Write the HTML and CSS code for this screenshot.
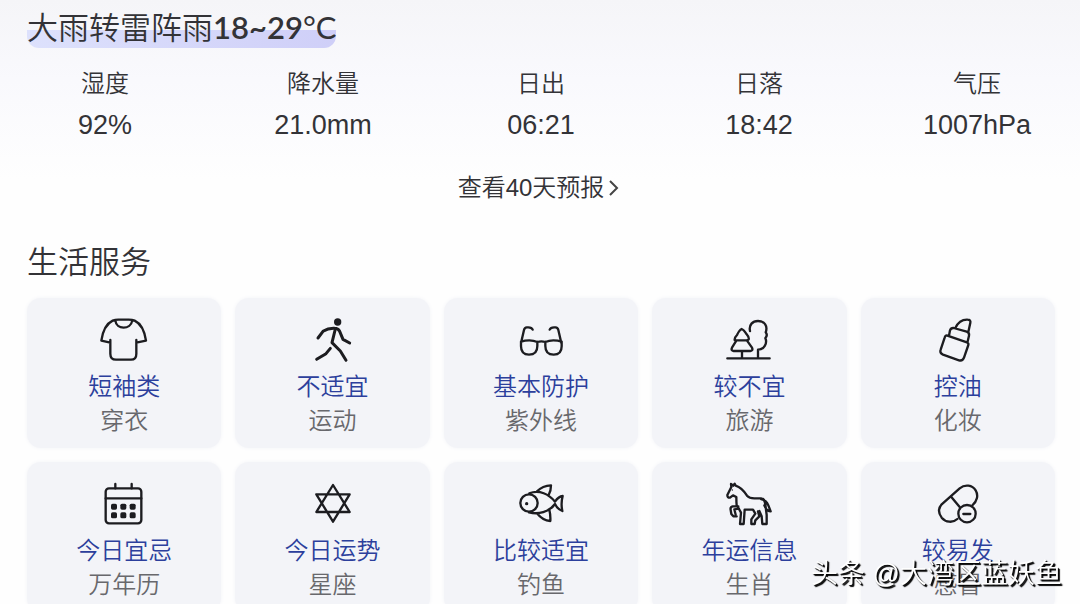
FILE: index.html
```html
<!DOCTYPE html>
<html lang="zh-CN">
<head>
<meta charset="utf-8">
<meta name="viewport" content="width=device-width, initial-scale=1">
<title>天气</title>
<link rel="stylesheet" href="styles.css">
</head>
<body>
<main class="page">
  <h1 class="summary"><span class="summary-text">大雨转雷阵雨<span class="summary-temp">18~29</span><span class="summary-unit">°C</span></span></h1>
  <dl class="stats">
    <div class="stat"><dt>湿度</dt><dd>92%</dd></div>
    <div class="stat"><dt>降水量</dt><dd>21.0mm</dd></div>
    <div class="stat"><dt>日出</dt><dd>06:21</dd></div>
    <div class="stat"><dt>日落</dt><dd>18:42</dd></div>
    <div class="stat"><dt>气压</dt><dd>1007hPa</dd></div>
  </dl>
  <a class="more" href="#forecast">查看40天预报<svg class="chevron" viewBox="0 0 12 18" aria-hidden="true"><path d="M2 2l7 7-7 7"/></svg></a>
  <section>
    <h2 class="section-title">生活服务</h2>
    <div class="cards">
      <a class="card" href="#dress">
        <svg class="icon" viewBox="0 0 210 180" aria-hidden="true"><path d="M64 90V131Q64 149 81 149H126Q142 149 142 131V90M64 98L37 92Q44 45 71 32Q78 29 88 29H119Q130 29 137 32Q164 45 171 92L142 98M79 31C82 60 125 60 130 31"/></svg>
        <span class="card-value">短袖类</span><span class="card-name">穿衣</span>
      </a>
      <a class="card" href="#sport">
        <svg class="icon icon-heavy" viewBox="-6 0 210 180" aria-hidden="true"><circle class="solid" cx="113" cy="36" r="11"/><path d="M54 84L69 64Q85 54 104 55Q114 55 119 64L129 88L149 99M106 57L96 98L121 123L138 151M91 115L78 131L50 148"/></svg>
        <span class="card-value">不适宜</span><span class="card-name">运动</span>
      </a>
      <a class="card" href="#uv">
        <svg class="icon" viewBox="-12 0 210 180" aria-hidden="true"><path d="M33 99L42 60Q44 51 52 52Q65 51 68 59M154 99L145 60Q143 51 135 52Q122 51 119 59M33 95Q45 91 58 91Q71 91 82 96Q94 92 106 96Q117 91 130 91Q143 91 155 95M33 95V109C33 126 43 134 57 134C73 134 82 124 82 108V96M155 95V109C155 126 145 134 131 134C115 134 106 124 106 108V96"/></svg>
        <span class="card-value">基本防护</span><span class="card-name">紫外线</span>
      </a>
      <a class="card" href="#travel">
        <svg class="icon" viewBox="0 0 210 180" aria-hidden="true"><path d="M40 145H167M84 123V144M132 144V119M62 90Q61 83 69 75Q76 60 83 57Q89 59 98 73Q106 82 104 88Q102 91 97 91H68Q62 91 62 90ZM67 92L54 113Q50 122 59 123H109Q118 122 114 113L99 92M108 63C104 44 116 33 132 33C152 33 162 48 155 67C159 72 160 78 154 84C161 101 150 119 132 119"/></svg>
        <span class="card-value">较不宜</span><span class="card-name">旅游</span>
      </a>
      <a class="card" href="#makeup">
        <svg class="icon" viewBox="-6 0 210 180" aria-hidden="true"><path d="M91 54C98 39 109 28 128 29Q138 29 136 38L130 66M72 77L75 61Q78 53 86 54L125 65Q134 68 132 77L127 98M65 76L128 98Q132 101 129 108L117 143Q113 154 102 151L54 134Q43 129 47 119L59 83Q61 76 65 76Z"/></svg>
        <span class="card-value">控油</span><span class="card-name">化妆</span>
      </a>
      <a class="card" href="#almanac">
        <svg class="icon" viewBox="0 -3 210 180" aria-hidden="true"><rect x="50" y="40" width="107" height="105" rx="10"/><path d="M50 70H157M79 27V40M128 27V40"/><g class="solid"><rect x="66" y="86" width="18" height="18" rx="5"/><rect x="94" y="86" width="18" height="18" rx="5"/><rect x="122" y="86" width="18" height="18" rx="5"/><rect x="66" y="112" width="18" height="18" rx="5"/><rect x="94" y="112" width="18" height="18" rx="5"/><rect x="122" y="112" width="18" height="18" rx="5"/></g></svg>
        <span class="card-value">今日宜忌</span><span class="card-name">万年历</span>
      </a>
      <a class="card" href="#horoscope">
        <svg class="icon" viewBox="-1 -3 210 180" aria-hidden="true"><path d="M104 30L154 111H54ZM104 140L54 58H154Z"/></svg>
        <span class="card-value">今日运势</span><span class="card-name">星座</span>
      </a>
      <a class="card" href="#fishing">
        <svg class="icon" viewBox="-12 -3 210 180" aria-hidden="true"><path d="M58 55C88 43 117 58 135 80Q146 64 158 63Q152 86 157 108Q143 103 135 87C117 112 85 119 57 112M81 49Q98 32 123 31Q123 48 116 60M81 115Q98 137 121 138Q122 120 118 104"/><circle cx="57" cy="84" r="26"/><circle class="solid" cx="50" cy="86" r="5"/></svg>
        <span class="card-value">比较适宜</span><span class="card-name">钓鱼</span>
      </a>
      <a class="card" href="#zodiac">
        <svg class="icon" viewBox="0 -3 210 180" aria-hidden="true"><path d="M52 36L51 27L58 32L62 26L65 32C78 36 90 48 99 62Q106 70 121 70H141Q153 72 154 88L158 120V147H145L143 124L136 108M141 72Q157 75 163 91L170 109Q158 109 151 91M52 36L40 60Q40 69 48 68L57 61L67 66Q67 81 68 91L75 102L81 113L78 147H89L92 104H117L124 116L112 133V147H122L124 136L136 124L132 109M73 94H56Q48 96 50 105L52 117L58 124H68M75 101L61 103L65 119"/><circle class="solid" cx="55" cy="45" r="2"/></svg>
        <span class="card-value">年运信息</span><span class="card-name">生肖</span>
      </a>
      <a class="card" href="#cold">
        <svg class="icon" viewBox="-6 -3 210 180" aria-hidden="true"><path d="M97 132C83 145 62 142 50 128Q34 107 50 88L104 40C120 27 142 30 152 46C161 61 156 80 142 91M79 66L104 96"/><circle cx="126" cy="116" r="26"/><path d="M115 117H136"/></svg>
        <span class="card-value">较易发</span><span class="card-name">感冒</span>
      </a>
    </div>
  </section>
</main>
<div class="watermark">头条 @大湾区蓝妖鱼</div>
</body>
</html>
```
FILE: styles.css
```css
* {
  box-sizing: border-box;
}

body {
  margin: 0;
  color: #333337;
  background: linear-gradient(#f5f5f8, #f9f9fd 80px, #fefefe 180px) no-repeat #fefefe;
  font-family: "Liberation Sans", "Noto Sans CJK SC DemiLight", "Noto Sans CJK SC", sans-serif;
  font-weight: 350;
  font-size: 24px;
  line-height: 34px;
}

a {
  color: inherit;
  text-decoration: none;
}

.page {
  padding: 8px 25px 0 27px;
}

.summary {
  display: flex;
  margin: 0;
  font-size: 31px;
  font-weight: 350;
  line-height: 38px;
}

.summary-text {
  background: linear-gradient(90deg, #dde1fc, #cfcff8) bottom / 100% 18px no-repeat;
  border-radius: 0 0 12px 12px;
}

.summary-temp,
.summary-unit {
  font-family: Lato, sans-serif;
  font-size: 31px;
  line-height: 38px;
}

.summary-temp {
  font-weight: 600;
}

.summary-unit {
  font-weight: 400;
}

.stats {
  display: flex;
  justify-content: space-between;
  margin: 19px 0 0;
  padding: 0 22px;
}

.stat {
  width: 112px;
  text-align: center;
}

.stat dt {
  line-height: 34px;
}

.stat dd {
  margin: 0;
  font-size: 27px;
  line-height: 48px;
}

.more {
  display: flex;
  align-items: center;
  justify-content: center;
  gap: 4px;
  margin: 22px 4px 0 0;
}

.chevron {
  width: 12px;
  height: 18px;
  fill: none;
  stroke: #444;
  stroke-width: 2;
}

.section-title {
  margin: 38px 0 15px;
  font-size: 31px;
  font-weight: 350;
  line-height: 40px;
}

.cards {
  display: grid;
  grid-template-columns: repeat(5, 1fr);
  gap: 14px;
}

.card {
  display: flex;
  flex-direction: column;
  align-items: center;
  padding: 12px 0 10px;
  border-radius: 14px;
  background: #f3f4f8;
  box-shadow: 0 0 4px #f3f4f8;
}

.icon {
  width: 70px;
  height: 60px;
  fill: none;
  stroke: #1c1c20;
  stroke-width: 7;
  stroke-linecap: round;
  stroke-linejoin: round;
}

.icon-heavy {
  stroke-width: 9;
}

.solid {
  fill: #1c1c20;
  stroke: none;
}

.card-value {
  color: #2c3f9c;
}

.card-name {
  color: #68686c;
}

.watermark {
  position: fixed;
  right: 18px;
  bottom: 13px;
  color: #fff;
  font-size: 27px;
  font-weight: 400;
  text-shadow: 1px 1px 1px #000, 2px 2px 1px #000;
}
```
